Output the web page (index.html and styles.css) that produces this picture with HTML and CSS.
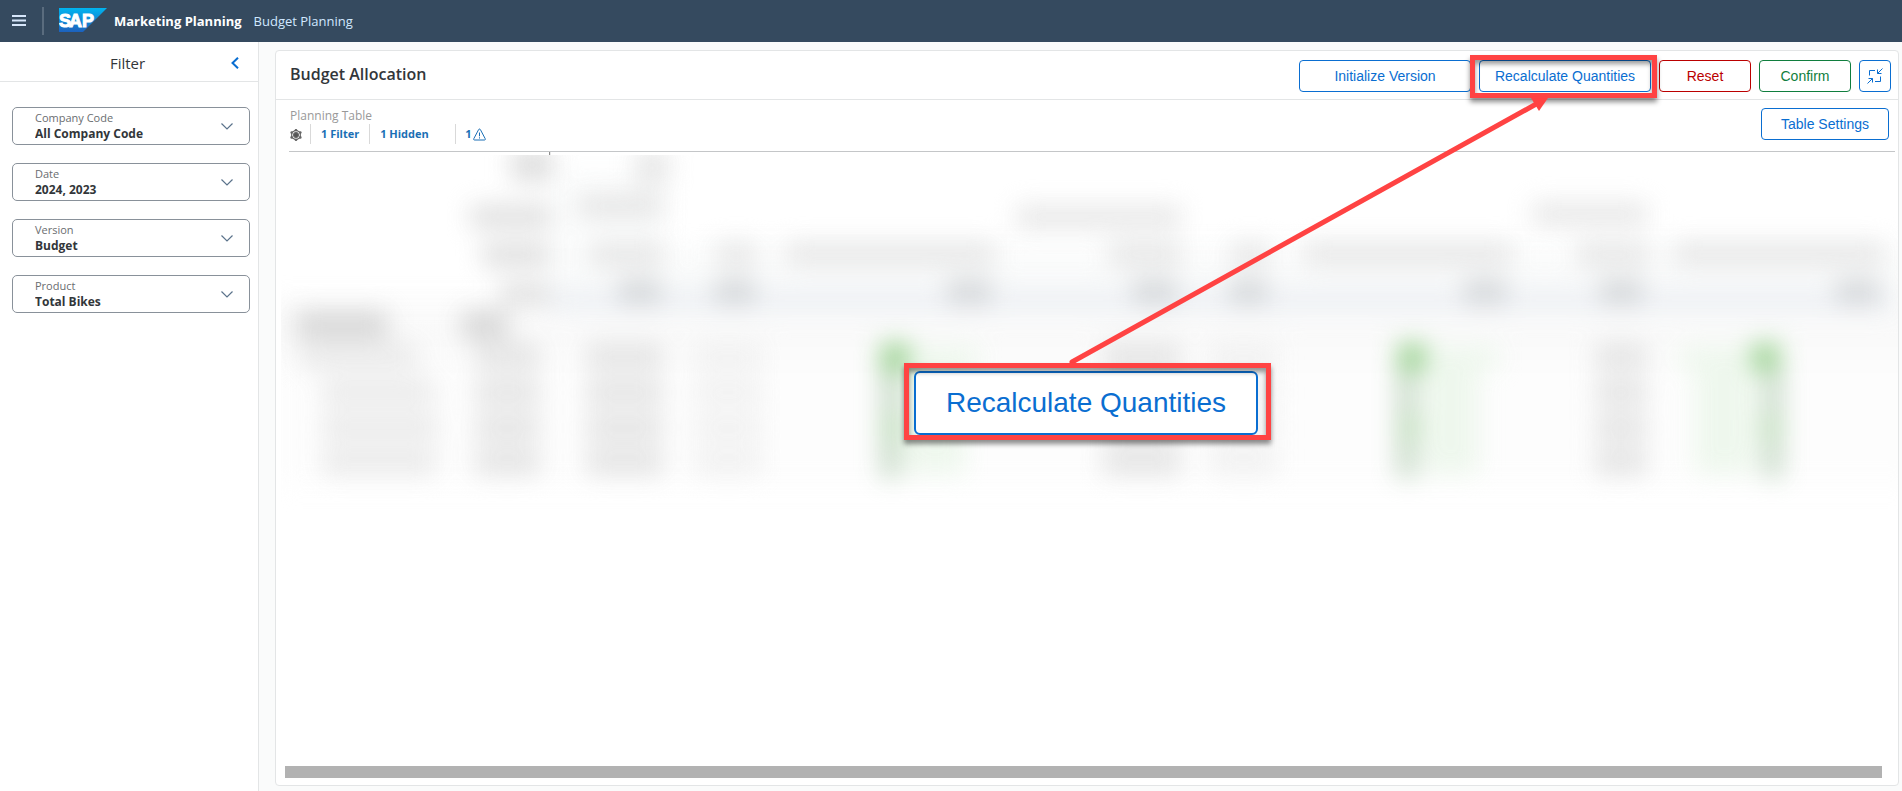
FILE: index.html
```html
<!DOCTYPE html>
<html lang="en">
<head>
<meta charset="utf-8">
<meta name="viewport" content="width=device-width, initial-scale=1">
<title>Marketing Planning - Budget Planning</title>
<link rel="stylesheet" href="styles.css">
</head>
<body>
<header class="shell">
  <button class="menu-btn" aria-label="Menu">
    <svg width="14" height="12" viewBox="0 0 14 12" stroke="#d6e6fa" stroke-width="2"><path d="M0 1H14M0 5.500H14M0 10H14"/></svg>
  </button>
  <span class="shell-divider"></span>
  <svg class="logo" width="48" height="24" viewBox="0 0 48 24" role="img" aria-label="SAP">
    <defs><linearGradient id="sap" x1="0" y1="0" x2="0" y2="1"><stop offset="0" stop-color="#00b4f0"/><stop offset="1" stop-color="#1d61bd"/></linearGradient></defs>
    <path d="M0 0H48L24 24H0Z" fill="url(#sap)"/>
    <text class="logo-text" y="19"><tspan x="0">S</tspan><tspan x="10">A</tspan><tspan x="23">P</tspan></text>
  </svg>
  <h1 class="app-title">Marketing Planning</h1>
  <span class="app-sub">Budget Planning</span>
</header>

<div class="body">
  <aside class="side">
    <div class="side-head">
      <h2 class="side-title">Filter</h2>
      <button class="collapse" aria-label="Collapse filter">
        <svg width="8" height="12" viewBox="0 0 8 12" fill="none" stroke="#0a6ed1" stroke-width="2"><path d="M7 .7L1.500 6L7 11.300"/></svg>
      </button>
    </div>
    <div class="filters">
      <div class="field">
        <label for="company">Company Code</label>
        <select id="company"><option>All Company Code</option></select>
        <svg class="chev" width="12" height="7" viewBox="0 0 12 7"><path d="M.5 .5L6 6L11.500 .5"/></svg>
      </div>
      <div class="field">
        <label for="date">Date</label>
        <select id="date"><option>2024, 2023</option></select>
        <svg class="chev" width="12" height="7" viewBox="0 0 12 7"><path d="M.5 .5L6 6L11.500 .5"/></svg>
      </div>
      <div class="field">
        <label for="version">Version</label>
        <select id="version"><option>Budget</option></select>
        <svg class="chev" width="12" height="7" viewBox="0 0 12 7"><path d="M.5 .5L6 6L11.500 .5"/></svg>
      </div>
      <div class="field">
        <label for="product">Product</label>
        <select id="product"><option>Total Bikes</option></select>
        <svg class="chev" width="12" height="7" viewBox="0 0 12 7"><path d="M.5 .5L6 6L11.500 .5"/></svg>
      </div>
    </div>
  </aside>

  <main class="main">
    <section class="card">
      <div class="card-head">
        <h2 class="card-title">Budget Allocation</h2>
        <div class="actions">
          <button class="btn wide">Initialize Version</button>
          <div class="marked">
            <button class="btn wide">Recalculate Quantities</button>
            <span class="mark"></span>
          </div>
          <button class="btn small red">Reset</button>
          <button class="btn small green">Confirm</button>
          <button class="btn icon" aria-label="Exit full screen">
            <svg width="16" height="16" viewBox="0 0 16 16" fill="none" stroke="#0a6ed1"><path d="M2.500 7.500V2.500H8M15.500 .5L10.500 5.500M10.500 1.500V5.500H14.500M13.500 8.500V13.500H8M.5 15.500L5.500 10.500M1.500 10.500H5.500V14.500"/></svg>
          </button>
        </div>
      </div>

      <div class="table-head">
        <div class="table-info">
          <h3 class="table-title">Planning Table</h3>
          <div class="chips">
            <span class="chip first">
              <svg width="12" height="12" viewBox="0 0 12 12" fill="none" stroke="#666" stroke-width="1.200"><path d="M6 1L10.300 3.500V8.500L6 11L1.700 8.500V3.500Z"/><circle cx="6" cy="6" r="2.400" fill="#555"/><g fill="#666" stroke="none"><circle cx="6" cy="1.300" r="1.300"/><circle cx="10.300" cy="3.600" r="1.300"/><circle cx="10.300" cy="8.400" r="1.300"/><circle cx="6" cy="10.700" r="1.300"/><circle cx="1.700" cy="8.400" r="1.300"/><circle cx="1.700" cy="3.600" r="1.300"/></g></svg>
            </span>
            <a class="chip" href="#filter">1 Filter</a>
            <a class="chip hidden-chip" href="#hidden">1 Hidden</a>
            <a class="chip warn" href="#warnings">1<svg width="13" height="13" viewBox="0 0 13 13" fill="none" stroke="#1a6fb5"><path d="M6.500 1Q7.100 1 7.500 1.800L12.200 10.700Q12.700 12 11.500 12H1.500Q.3 12 .8 10.700L5.500 1.800Q5.900 1 6.500 1ZM6.500 4.500V8.300M6.500 9.300V10.500"/></svg></a>
          </div>
        </div>
        <button class="btn settings">Table Settings</button>
      </div>

      <div class="grid-area">
        <svg class="haze" viewBox="281 152 1616 360" preserveAspectRatio="none" aria-hidden="true">
          <defs>
            <filter id="soft" color-interpolation-filters="sRGB" filterUnits="userSpaceOnUse" x="281" y="100" width="1616" height="420"><feGaussianBlur stdDeviation="12"/></filter>
            <filter id="wide" color-interpolation-filters="sRGB" filterUnits="userSpaceOnUse" x="281" y="100" width="1616" height="420"><feGaussianBlur stdDeviation="14"/></filter>
            <clipPath id="under"><rect x="281" y="155" width="1616" height="360"/></clipPath>
          </defs>
          <path d="M549.500 152V155" stroke="#777"/>
          <g clip-path="url(#under)">
            <g filter="url(#wide)">
              <rect x="260" y="300" width="1660" height="70" fill="#fafafa"/>
              <rect x="270" y="360" width="1650" height="125" fill="#fdfdfd"/>
              <rect x="550" y="170" width="115" height="120" fill="#fbfcfc"/>
              <rect x="550" y="248" width="1360" height="50" fill="#fafbfb"/>
            </g>
            <g filter="url(#soft)" opacity=".9">
              <path fill="#edf0f4" d="M550 288H1892V312H550Z"/>
              <path fill="#dcdcdc" d="M511 148h42v34h-42ZM470 205h82v23h-82ZM482 243h68v24h-68ZM500 283h50v22h-50Z"/>
              <path fill="#e4e4e4" d="M636 150h32v34h-32ZM578 194h84v24h-84ZM1016 206h164v22h-164ZM1532 203h114v22h-114ZM590 243h73v23h-73ZM716 243h40v23h-40ZM786 243h209v22h-209ZM1108 243h73v23h-73ZM1230 243h39v23h-39ZM1303 243h209v22h-209ZM1576 243h72v23h-72ZM1673 243h210v22h-210Z"/>
              <path fill="#d0d3d6" d="M618 280h43v24h-43ZM714 280h41v24h-41ZM947 280h44v24h-44ZM1132 280h44v24h-44ZM1229 280h38v24h-38ZM1463 280h43v24h-43ZM1599 280h43v24h-43ZM1835 280h43v24h-43Z"/>
              <path fill="#d4d4d4" d="M296 311h92v28h-92ZM461 311h47v28h-47Z"/>
              <path fill="#e9e9e9" d="M300 343h118v26h-118ZM322 379h113v26h-113ZM322 414h116v26h-116ZM322 448h114v27h-114Z"/>
              <path fill="#e2e2e2" d="M475 343h65v26h-65ZM475 379h65v26h-65ZM475 414h65v26h-65ZM475 448h65v27h-65ZM586 343h77v26h-77ZM586 379h77v26h-77ZM586 414h77v26h-77ZM586 448h77v27h-77ZM1102 343h78v26h-78ZM1102 379h78v26h-78ZM1102 414h78v26h-78ZM1102 448h78v27h-78ZM1594 343h52v26h-52ZM1594 379h52v26h-52ZM1594 414h52v26h-52ZM1594 448h52v27h-52Z"/>
              <path fill="#f0f0f0" d="M694 343h68v26h-68ZM694 379h68v26h-68ZM694 414h68v26h-68ZM694 448h68v27h-68ZM1209 343h68v26h-68ZM1209 379h68v26h-68ZM1209 414h68v26h-68ZM1209 448h68v27h-68Z"/>
              <path fill="#edf7ec" d="M905 346h74v22h-74ZM905 368h60v106h-60ZM1422 346h76v22h-76ZM1422 368h56v106h-56ZM1678 346h76v22h-76ZM1694 368h60v106h-60Z"/>
              <path fill="#c4d8c4" d="M880 370h20v108h-20ZM1396 370h20v108h-20ZM1762 370h20v108h-20Z"/>
              <path fill="#94cf8a" d="M880 343h29v28h-29ZM1397 343h28v28h-28ZM1751 343h28v28h-28Z"/>
              <path fill="#bbddb5" d="M882 418h20v20h-20ZM1399 418h20v20h-20ZM1760 418h20v20h-20Z"/>
            </g>
          </g>
        </svg>
      </div>
      <div class="scrollbar"></div>

      <svg class="arrow" width="490" height="272" viewBox="1066 96 490 272" aria-hidden="true">
        <path d="M1072 362L1538 103" fill="none" stroke="#ff4343" stroke-width="5" stroke-linecap="round"/>
        <path d="M1531 98H1548L1539 111Z" fill="#ff4343"/>
      </svg>
      <div class="callout">
        <button class="btn big">Recalculate Quantities</button>
        <span class="mark"></span>
      </div>
    </section>
  </main>
</div>
</body>
</html>
```
FILE: styles.css
```css
* { box-sizing: border-box; }
body {
  margin: 0;
  min-height: 100vh;
  display: flex;
  flex-direction: column;
  font-family: "Open Sans", "Noto Sans", sans-serif;
  color: #32363a;
  background: #fafbfb;
}
h1, h2, h3 { margin: 0; }
button { font: inherit; cursor: pointer; }
svg { display: block; }

.shell {
  height: 42px;
  display: flex;
  align-items: center;
  background: #354a5f;
  color: #fff;
  padding-left: 12px;
}
.menu-btn { border: 0; background: none; padding: 0; width: 14px; }
.shell-divider { width: 2px; height: 28px; margin: 0 15px 0 16px; background: #5a6c7e; }
.logo { margin: 0 7px 2px 0; }
.logo-text {
  font: bold 18px "Liberation Sans", Arial, sans-serif;
  fill: #fff;
  stroke: #fff;
  stroke-width: 1px;
}
.app-title { font-size: 13px; font-weight: 700; line-height: 20px; }
.app-sub { margin-left: 12px; font-size: 13px; line-height: 20px; color: #d1e8ff; }

.body { flex: 1; display: flex; }
.side { width: 259px; flex: none; background: #fff; border-right: 1px solid #e3e5e6; }
.side-head {
  height: 40px;
  display: flex;
  align-items: center;
  padding: 2px 19px 0 0;
  border-bottom: 1px solid #e3e5e6;
}
.side-title { flex: 1; padding-left: 24px; text-align: center; font-size: 15px; font-weight: 400; line-height: 24px; }
.collapse { border: 0; background: none; padding: 0; }
.filters { display: flex; flex-direction: column; gap: 18px; padding: 25px 8px 0 12px; }
.field {
  height: 38px;
  display: grid;
  grid-template-columns: 1fr 12px;
  grid-template-rows: 16px 16px;
  align-content: center;
  align-items: center;
  padding: 0 16px 0 22px;
  border: 1px solid #89919a;
  border-radius: 5px;
  line-height: 16px;
}
.field label { font-size: 11px; color: #6a6d70; }
.field select {
  grid-row: 2;
  grid-column: 1;
  appearance: none;
  border: 0;
  padding: 0;
  margin: 0;
  background: none;
  font: 700 12px/16px "Open Sans", "Noto Sans", sans-serif;
  color: #32363a;
}
.chev { grid-column: 2; grid-row: 1 / 3; fill: none; stroke: #5b738b; stroke-width: 1.2; }

.main { flex: 1; min-width: 0; display: flex; padding: 8px 3px 5px 16px; }
.card {
  position: relative;
  flex: 1;
  min-width: 0;
  display: flex;
  flex-direction: column;
  background: #fff;
  border: 1px solid #e3e5e6;
  border-radius: 4px;
}
.card-head {
  height: 49px;
  display: flex;
  justify-content: space-between;
  align-items: flex-start;
  padding: 9px 7px 0 14px;
  border-bottom: 1px solid #e3e5e6;
}
.card-title { font-size: 16px; font-weight: 600; line-height: 28px; }
.actions { display: flex; gap: 8px; }
.btn {
  height: 32px;
  padding: 0;
  border: 1px solid #0a6ed1;
  border-radius: 4px;
  background: #fff;
  color: #0a6ed1;
  font: 14px/16px "Liberation Sans", Arial, sans-serif;
  white-space: nowrap;
}
.wide { width: 172px; }
.small { width: 92px; }
.icon { width: 32px; display: grid; place-items: center; }
.red { color: #b00; border-color: #b00; }
.green { color: #107e3e; border-color: #107e3e; }
.marked { position: relative; }
.marked .btn { display: block; }
.mark {
  position: absolute;
  inset: -5px -6px -6px -9px;
  border: 5px solid #ff4343;
  box-shadow: 0 4px 5px rgba(0, 0, 0, .45), inset 0 4px 5px rgba(0, 0, 0, .4);
  pointer-events: none;
}

.table-head {
  height: 52px;
  display: flex;
  justify-content: space-between;
  align-items: flex-start;
  margin: 0 3px 0 13px;
  padding: 8px 6px 0 1px;
  border-bottom: 1px solid #c4c6c8;
}
.table-title { font-size: 12px; font-weight: 400; line-height: 16px; color: #999; }
.chips { display: flex; }
.chip {
  height: 20px;
  padding: 0 10px;
  border-right: 1px solid #d9d9d9;
  font-size: 11px;
  font-weight: 700;
  line-height: 20px;
  color: #1a6fb5;
  text-decoration: none;
}
.first { padding: 5px 8px 0 0; }
.hidden-chip { width: 86px; }
.warn { display: flex; align-items: center; gap: 2px; padding: 0 0 0 9px; border: 0; }
.settings { width: 128px; }

.grid-area { flex: 1; margin-left: 5px; }
.haze { width: 100%; height: 360px; }
.scrollbar { height: 12px; margin: 0 16px 7px 9px; background: #b2b2b2; }

.arrow { position: absolute; top: 45px; right: 342px; }
.callout { position: absolute; top: 320px; right: 640px; }
.big { display: block; width: 344px; height: 64px; border-width: 2px; border-radius: 6px; font-size: 28px; line-height: 32px; }
.callout .mark { inset: -8px -13px -5px -10px; }
```
